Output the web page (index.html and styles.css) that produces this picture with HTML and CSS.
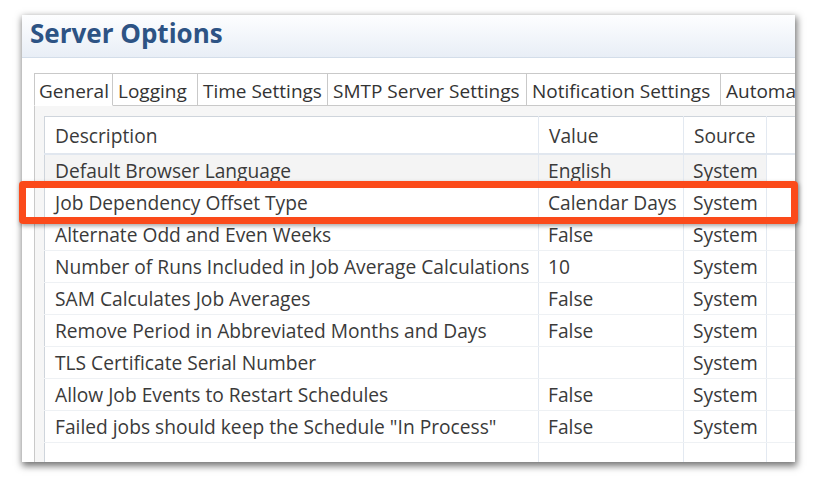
FILE: index.html
```html
<!DOCTYPE html>
<html>
<head>
<meta charset="utf-8">
<title>Server Options</title>
<link rel="stylesheet" href="styles.css">
</head>
<body>
<div class="stage">
  <div class="window">
    <div class="header"><h1 class="title">Server Options</h1></div>
    <div class="content">
      <div class="tabs">
        <div class="tab selected t-general">General</div>
        <div class="tab t-logging">Logging</div>
        <div class="tab t-time">Time Settings</div>
        <div class="tab t-smtp">SMTP Server Settings</div>
        <div class="tab t-notify">Notification Settings</div>
        <div class="tab t-auto">Automation Settings</div>
      </div>
      <div class="panel">
        <table class="grid">
          <colgroup>
            <col class="c-desc"><col class="c-val"><col class="c-src"><col class="c-fill">
          </colgroup>
          <thead>
            <tr><th>Description</th><th>Value</th><th>Source</th><th></th></tr>
          </thead>
          <tbody>
            <tr class="shade"><td>Default Browser Language</td><td>English</td><td>System</td><td class="fill"></td></tr>
            <tr><td>Job Dependency Offset Type</td><td>Calendar Days</td><td>System</td><td></td></tr>
            <tr><td>Alternate Odd and Even Weeks</td><td>False</td><td>System</td><td></td></tr>
            <tr><td>Number of Runs Included in Job Average Calculations</td><td>10</td><td>System</td><td></td></tr>
            <tr><td>SAM Calculates Job Averages</td><td>False</td><td>System</td><td></td></tr>
            <tr><td>Remove Period in Abbreviated Months and Days</td><td>False</td><td>System</td><td></td></tr>
            <tr><td>TLS Certificate Serial Number</td><td></td><td>System</td><td></td></tr>
            <tr><td>Allow Job Events to Restart Schedules</td><td>False</td><td>System</td><td></td></tr>
            <tr><td>Failed jobs should keep the Schedule "In Process"</td><td>False</td><td>System</td><td></td></tr>
            <tr><td></td><td></td><td></td><td></td></tr>
          </tbody>
        </table>
      </div>
    </div>
  </div>
  <div class="highlight"></div>
</div>
</body>
</html>
```

FILE: styles.css
```css
html, body {
  margin: 0;
  padding: 0;
  background: #ffffff;
}
.stage {
  position: relative;
  width: 818px;
  height: 477px;
  box-sizing: border-box;
  padding: 15px 23px 0 22px;
  overflow: hidden;
}
.window {
  width: 773px;
  height: 447px;
  background: #ffffff;
  box-shadow: 1px 3px 7px 1px rgba(0, 0, 0, 0.55);
  display: flex;
  flex-direction: column;
  overflow: hidden;
}
.header {
  height: 42px;
  flex: none;
  background: linear-gradient(#fdfeff, #e8eef6);
  border-bottom: 1px solid #d3dde9;
  padding-left: 8px;
}
.title {
  margin: 0;
  font-family: "Open Sans", "Noto Sans", sans-serif;
  font-weight: 700;
  font-size: 26px;
  line-height: 37px;
  color: #2d5384;
}
.content {
  flex: 1;
  padding: 15px 0 0 12px;
  display: flex;
  flex-direction: column;
  min-height: 0;
}
.tabs {
  display: flex;
  height: 33px;
  flex: none;
}
.tab {
  flex: none;
  box-sizing: border-box;
  height: 33px;
  padding: 0 0 0 5px;
  border: 1px solid #c9c9c9;
  border-left: none;
  background: #ffffff;
  font-family: "Open Sans", "Noto Sans", sans-serif;
  font-size: 19px;
  line-height: 34px;
  color: #333333;
  white-space: nowrap;
  overflow: hidden;
}
.tab.selected {
  border-left: 1px solid #c9c9c9;
  border-bottom-color: #ffffff;
  padding-left: 4px;
}
.t-general { width: 79px; }
.t-logging { width: 85px; }
.t-time { width: 130px; }
.t-smtp { width: 199px; }
.t-notify { width: 194px; }
.t-auto { width: 190px; }
.panel {
  flex: 1;
  min-height: 0;
  border-left: 1px solid #c9c9c9;
  background: #f6f6f6;
  padding: 10px 0 0 9px;
  overflow: hidden;
}
.grid {
  border-collapse: collapse;
  background: #ffffff;
  border-top: 1px solid #cfd5dc;
  border-left: 1px solid #cfd5dc;
  table-layout: fixed;
  width: 800px;
  font-family: "Open Sans", "Noto Sans", sans-serif;
  font-size: 19.2px;
  color: #3a3a3a;
}
.c-desc { width: 494px; }
.c-val { width: 145px; }
.c-src { width: 83px; }
.c-fill { width: 78px; }
.grid th {
  height: 36px;
  font-weight: 400;
  text-align: left;
  padding: 0 0 0 10px;
  border-bottom: 2px solid #e1e7ef;
  border-right: 1px solid #e3e9f1;
  white-space: nowrap;
}
.grid td {
  height: 31px;
  padding: 0 0 0 9px;
  border-bottom: 1px solid #eef1f4;
  border-right: 1px solid #e3e9f1;
  white-space: nowrap;
  overflow: hidden;
}
.grid td:first-child { padding-left: 10px; }
.grid tr.shade td { background: #f4f4f4; }
.grid tr.shade td.fill { background: #ffffff; }
.highlight {
  position: absolute;
  left: 19px;
  top: 181px;
  width: 779px;
  height: 43px;
  box-sizing: border-box;
  border: 7px solid #fb4a1a;
  border-radius: 4px;
  box-shadow: 1px 2px 4px rgba(0, 0, 0, 0.35);
}
```
